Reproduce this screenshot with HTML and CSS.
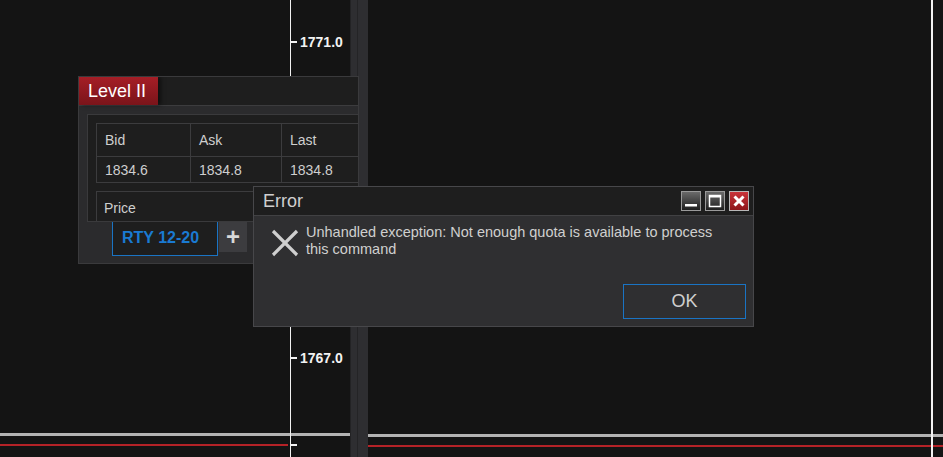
FILE: index.html
```html
<!DOCTYPE html>
<html lang="en">
<head>
    <meta charset="UTF-8">
    <meta name="viewport" content="width=device-width, initial-scale=1.0">
    <title>Level II - Error</title>
    <link rel="stylesheet" href="styles.css">
</head>
<body>
    <div class="workspace">
        <!-- chart canvas -->
        <div class="chart">
            <div class="axis-line"></div>
            <div class="axis-line right"></div>
            <div class="tick" style="top: 41px;"></div>
            <div class="axis-label" style="top: 34px;">1771.0</div>
            <div class="tick" style="top: 357px;"></div>
            <div class="axis-label" style="top: 350px;">1767.0</div>
            <div class="tick" style="top: 444px;"></div>
            <div class="level gray left"></div>
            <div class="level gray right"></div>
            <div class="level red left"></div>
            <div class="level red right"></div>
            <div class="splitter"></div>
        </div>

        <!-- Level II panel -->
        <div class="panel">
            <div class="panel-header">
                <div class="panel-tab">Level II</div>
            </div>
            <div class="panel-body">
                <div class="quote-box">
                    <table class="quote-table">
                        <tr class="head">
                            <td>Bid</td>
                            <td>Ask</td>
                            <td>Last</td>
                        </tr>
                        <tr>
                            <td>1834.6</td>
                            <td>1834.8</td>
                            <td>1834.8</td>
                        </tr>
                    </table>
                    <div class="price-box">Price</div>
                </div>
                <div class="symbol-tabs">
                    <div class="symbol-tab">RTY 12-20</div>
                    <div class="add-tab">+</div>
                </div>
            </div>
        </div>

        <!-- Error dialog -->
        <div class="dialog">
            <div class="dialog-title">
                <span>Error</span>
                <div class="win-buttons">
                    <div class="win-btn">
                        <svg width="20" height="20" viewBox="0 0 20 20"><rect x="4" y="13" width="12" height="2.5" fill="#fff"/></svg>
                    </div>
                    <div class="win-btn">
                        <svg width="20" height="20" viewBox="0 0 20 20"><rect x="4.5" y="4.5" width="11" height="11" fill="none" stroke="#fff" stroke-width="1.5"/><rect x="4" y="4" width="12" height="2.5" fill="#fff"/></svg>
                    </div>
                    <div class="win-btn close">
                        <svg width="20" height="20" viewBox="0 0 20 20"><path d="M5.5 5.5L14.5 14.5M14.5 5.5L5.5 14.5" stroke="#fff" stroke-width="3"/></svg>
                    </div>
                </div>
            </div>
            <div class="dialog-body">
                <div class="message">
                    <svg class="error-icon" width="28" height="28" viewBox="0 0 28 28">
                        <path d="M2 2L26 26M26 2L2 26" stroke="#cfcfcf" stroke-width="3.2"/>
                    </svg>
                    <p>Unhandled exception: Not enough quota is available to process this command</p>
                </div>
                <div class="dialog-footer">
                    <button class="ok-button">OK</button>
                </div>
            </div>
        </div>
    </div>
</body>
</html>
```

FILE: styles.css
```css
* {
    margin: 0;
    padding: 0;
    box-sizing: border-box;
}

body {
    background: #141414;
    font-family: "Liberation Sans", Arial, sans-serif;
    overflow: hidden;
}

.workspace {
    position: relative;
    width: 943px;
    height: 457px;
    overflow: hidden;
}

/* chart */

.chart {
    position: absolute;
    inset: 0;
}

.axis-line {
    position: absolute;
    left: 290px;
    top: 0;
    width: 1px;
    height: 457px;
    background: #f2f2f2;
    z-index: 2;
}

.axis-line.right {
    left: 931px;
    width: 2px;
}

.tick {
    position: absolute;
    left: 291px;
    width: 6px;
    height: 2px;
    background: #f2f2f2;
}

.axis-label {
    position: absolute;
    left: 300px;
    color: #f2f2f2;
    font-size: 14px;
    font-weight: 700;
    line-height: 16px;
}

.level {
    position: absolute;
}

.level.gray {
    height: 3px;
    background: #b3b3b3;
}

.level.gray.left {
    left: 0;
    width: 350px;
    top: 433px;
}

.level.gray.right {
    left: 368px;
    right: 0;
    top: 434px;
}

.level.red {
    height: 2px;
    background: #b52227;
}

.level.red.left {
    left: 0;
    width: 288px;
    top: 444px;
}

.level.red.right {
    left: 368px;
    right: 0;
    top: 445px;
}

.splitter {
    position: absolute;
    left: 350px;
    top: 0;
    width: 18px;
    height: 457px;
    background: #2e2e31;
    border-left: 1px solid #232325;
    z-index: 3;
}

.splitter::after {
    content: "";
    position: absolute;
    left: 6px;
    top: 0;
    width: 1px;
    height: 100%;
    background: #242426;
}

/* Level II panel */

.panel {
    position: absolute;
    left: 78px;
    top: 76px;
    width: 281px;
    height: 188px;
    border: 1px solid #3a3a3c;
    background: #2b2b2d;
    overflow: hidden;
    z-index: 5;
    display: flex;
    flex-direction: column;
}

.panel-header {
    height: 29px;
    background: #1e1e1e;
    border-bottom: 1px solid #3c3c3e;
    display: flex;
}

.panel-tab {
    width: 79px;
    height: 28px;
    background: linear-gradient(to bottom, #a51e26, #7a141a);
    color: #ffffff;
    font-size: 18px;
    line-height: 28px;
    padding-left: 9px;
    box-shadow: 3px 0 4px rgba(0, 0, 0, 0.5);
}

.panel-body {
    flex: 1;
    padding: 8px 0 0 8px;
}

.quote-box {
    width: 290px;
    height: 108px;
    background: #1e1e1e;
    border: 1px solid #3a3a3c;
    padding: 8px 0 0 8px;
    overflow: hidden;
}

.quote-table {
    border-collapse: collapse;
    color: #cfcfcf;
    font-size: 14px;
}

.quote-table td {
    border: 1px solid #3c3c3e;
    padding: 0 0 0 8px;
    height: 26px;
}

.quote-table tr.head td {
    height: 33px;
}

.quote-table td:nth-child(1) {
    width: 94px;
}

.quote-table td:nth-child(2) {
    width: 91px;
}

.quote-table td:nth-child(3) {
    width: 90px;
}

.price-box {
    margin-top: 8px;
    height: 30px;
    border: 1px solid #3c3c3e;
    border-bottom: none;
    color: #cfcfcf;
    font-size: 14px;
    padding: 8px 0 0 7px;
}

.symbol-tabs {
    display: flex;
    margin-left: 25px;
    align-items: flex-start;
}

.symbol-tab {
    width: 106px;
    height: 34px;
    background: #1e1e1e;
    border: 1px solid #1a74c4;
    border-top: none;
    color: #1a7ad2;
    font-size: 16px;
    font-weight: 700;
    line-height: 32px;
    padding-left: 9px;
}

.add-tab {
    width: 28px;
    height: 30px;
    margin-left: 1px;
    background: #3c3c3f;
    color: #d8d8d8;
    font-size: 24px;
    font-weight: 700;
    line-height: 30px;
    text-align: center;
}

/* Error dialog */

.dialog {
    position: absolute;
    left: 253px;
    top: 186px;
    width: 501px;
    height: 141px;
    border: 1px solid #47474a;
    background: #2f2f31;
    z-index: 10;
    display: flex;
    flex-direction: column;
}

.dialog-title {
    height: 29px;
    background: #1e1e1e;
    border-bottom: 1px solid #414143;
    display: flex;
    align-items: center;
    justify-content: space-between;
    padding: 0 4px 0 9px;
    color: #cfcfcf;
    font-size: 18px;
}

.win-buttons {
    display: flex;
    gap: 4px;
}

.win-btn {
    width: 20px;
    height: 20px;
    border: 1px solid #9a9a9a;
    background: linear-gradient(to bottom, #6a6a6a, #1e1e1e);
    display: flex;
    align-items: center;
    justify-content: center;
    overflow: hidden;
}

.win-btn svg {
    flex: none;
}

.win-btn.close {
    background: linear-gradient(to bottom, #c9343a, #8e161b);
    border-color: #b8b8b8;
}

.dialog-body {
    flex: 1;
    display: flex;
    flex-direction: column;
    justify-content: space-between;
    padding: 8px 7px 7px 17px;
}

.message {
    display: flex;
    align-items: flex-start;
    gap: 7px;
}

.error-icon {
    flex: none;
    margin-top: 5px;
}

.message p {
    color: #cfcfcf;
    font-size: 14.5px;
    line-height: 17px;
    width: 432px;
}

.dialog-footer {
    display: flex;
    justify-content: flex-end;
}

.ok-button {
    width: 123px;
    height: 35px;
    background: #2f2f31;
    border: 1px solid #1a74c4;
    color: #cfcfcf;
    font-family: "Liberation Sans", Arial, sans-serif;
    font-size: 18px;
}
```
